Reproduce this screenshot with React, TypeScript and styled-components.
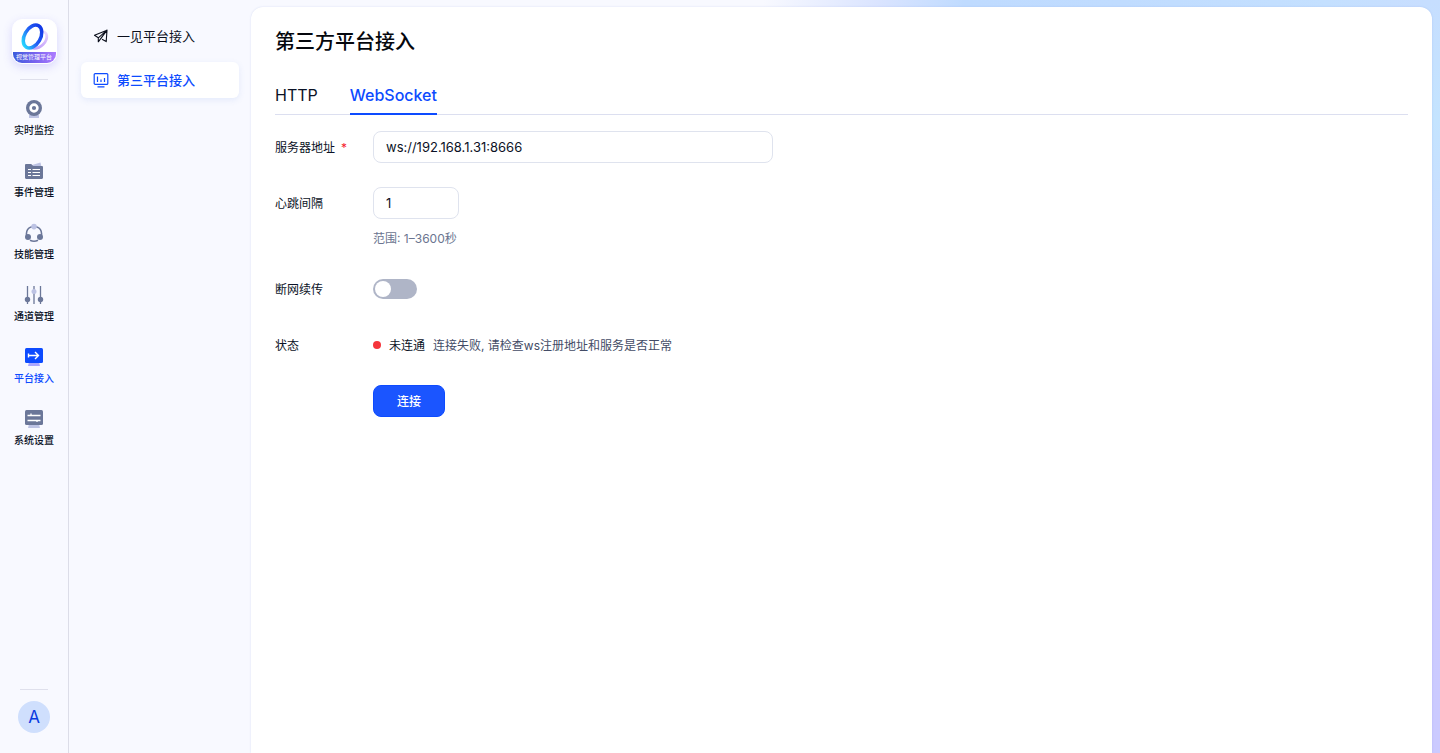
import React, { useState } from 'react';
import styled, { createGlobalStyle } from 'styled-components';

const GlobalStyle = createGlobalStyle`
  *, *::before, *::after { box-sizing: border-box; }
  body {
    margin: 0;
    color: #0b1226;
    background: #f8f9ff;
    font-family: Inter, "Noto Sans CJK SC", sans-serif;
    font-size: 12px;
    line-height: 20px;
  }
  a { color: inherit; text-decoration: none; }
  button, input { font: inherit; color: inherit; }
`;

const Page = styled.div`
  display: flex;
  min-height: 100vh;
  background:
    linear-gradient(180deg, #c6deff 0, #c4e4ff 120px, #cbdcff 250px, #cbcbff 420px, #cbcaff 100%) right / 20px 100% no-repeat,
    linear-gradient(90deg, #f8f9ff 53%, #dae4ff 61%, #bfdbff 67%, #c0dcff 78%, #c4e0ff 92%, #c9deff 100%) top / 100% 20px no-repeat,
    #f8f9ff;
`;

const Rail = styled.nav`
  display: flex;
  flex: none;
  flex-direction: column;
  align-items: center;
  width: 69px;
  padding: 19px 0 20px;
  background: #f8f9ff;
  border-right: 1px solid #dcdde8;
`;

const LogoTile = styled.a`
  display: flex;
  flex-direction: column;
  align-items: center;
  width: 45px;
  height: 45px;
  overflow: hidden;
  border: 1px solid #fff;
  border-radius: 10px;
  background: #fff;
  box-shadow: 0 3px 10px rgba(105, 90, 240, 0.22);
`;

const LogoMark = styled.svg`
  flex: none;
  width: 43px;
  height: 32px;
`;

const LogoCaption = styled.span`
  width: 100%;
  height: 11px;
  color: #fff;
  font-size: 6px;
  line-height: 10px;
  text-align: center;
  white-space: nowrap;
  background: linear-gradient(90deg, #3b5bdc, #7762ee 50%, #ad7cff);
`;

const RailDivider = styled.hr`
  width: 28px;
  height: 1px;
  margin: 15px 0 0;
  border: 0;
  background: #dfe0ec;
`;

const RailList = styled.ul`
  display: flex;
  flex: 1;
  flex-direction: column;
  gap: 22px;
  margin: 0;
  padding: 19px 0 0;
  list-style: none;
`;

const RailLink = styled.a<{ $active?: boolean }>`
  display: flex;
  flex-direction: column;
  align-items: center;
  gap: 3px;
  height: 40px;
  color: ${(p) => (p.$active ? '#0d4bff' : '#0b1226')};
  font-size: 10px;
  font-weight: 500;
  line-height: 16px;

  svg { flex: none; width: 20px; height: 20px; }
`;

const Avatar = styled.button`
  width: 32px;
  height: 32px;
  margin-top: 11px;
  padding: 0;
  border: 0;
  border-radius: 50%;
  color: #0a3be0;
  font-size: 17px;
  line-height: 32px;
  background: #cfdffd;
`;

const SideMenu = styled.nav`
  display: flex;
  flex: none;
  flex-direction: column;
  gap: 8px;
  width: 182px;
  padding: 18px 12px;
  background: #f8f9ff;
`;

const MenuLink = styled.a<{ $active?: boolean }>`
  display: flex;
  align-items: center;
  gap: 8px;
  height: 36px;
  padding: 0 12px;
  border-radius: 6px;
  color: ${(p) => (p.$active ? '#0d4bff' : '#0b0f1c')};
  font-size: 13px;
  font-weight: ${(p) => (p.$active ? 500 : 400)};
  background: ${(p) => (p.$active ? '#fff' : 'transparent')};
  box-shadow: ${(p) => (p.$active ? '0 2px 6px rgba(80, 120, 220, 0.12)' : 'none')};

  svg { width: 16px; height: 16px; }
`;

const Content = styled.main`
  flex: 1;
  min-width: 0;
  margin: 7px 8px 0 0;
  padding: 20px 24px;
  border-radius: 12px 12px 0 0;
  background: #fff;
  box-shadow: 0 0 2px rgba(90, 120, 200, 0.22);
`;

const Title = styled.h1`
  margin: 0;
  color: #05070d;
  font-size: 20px;
  font-weight: 500;
  line-height: 30px;
`;

const Tabs = styled.div`
  display: flex;
  gap: 32px;
  margin: 18px 0 16px;
  border-bottom: 1px solid #dcdff0;
`;

const Tab = styled.button<{ $active: boolean }>`
  height: 40px;
  margin-bottom: -1px;
  padding: 2px 0 0;
  border: 0;
  border-bottom: 2px solid ${(p) => (p.$active ? '#0d4bff' : 'transparent')};
  color: ${(p) => (p.$active ? '#0d4bff' : '#0b1226')};
  font-size: 16px;
  font-weight: ${(p) => (p.$active ? 500 : 400)};
  background: none;
  cursor: pointer;
`;

const Form = styled.form`
  display: flex;
  flex-direction: column;
  gap: 24px;
`;

const Row = styled.div`
  display: flex;
  align-items: flex-start;
`;

const FieldLabel = styled.label`
  flex: none;
  width: 98px;
  height: 32px;
  line-height: 34px;
`;

const Required = styled.span`
  margin-left: 6px;
  color: #f5222d;
`;

const Field = styled.div`
  display: flex;
  align-items: center;
  flex-wrap: wrap;
  gap: 8px;
  min-height: 32px;
`;

const NumberField = styled(Field)`
  flex-direction: column;
  align-items: flex-start;
  gap: 10px;
`;

const TextInput = styled.input<{ $width: number }>`
  width: ${(p) => p.$width}px;
  height: 32px;
  padding: 0 12px;
  border: 1px solid #dfe3ee;
  border-radius: 8px;
  outline: none;
  font-size: 13px;
  background: #fff;
`;

const Hint = styled.span`
  color: #6b7590;
  line-height: 20px;
`;

const Switch = styled.input`
  appearance: none;
  display: flex;
  width: 44px;
  height: 20px;
  margin: 0;
  padding: 2px;
  border-radius: 10px;
  background: #afb5c7;
  cursor: pointer;

  &::before {
    content: '';
    width: 16px;
    height: 16px;
    border-radius: 50%;
    background: #fff;
  }
  &:checked { justify-content: flex-end; background: #0d4bff; }
`;

const StatusDot = styled.i`
  width: 8px;
  height: 8px;
  border-radius: 50%;
  background: #f5353b;
`;

const StatusText = styled.span<{ $muted?: boolean }>`
  height: 32px;
  color: ${(p) => (p.$muted ? '#434c66' : '#0b1226')};
  line-height: 34px;
`;

const SubmitButton = styled.button`
  width: 72px;
  height: 32px;
  margin-left: 98px;
  padding: 2px 0 0;
  border: 1px solid #0d4bff;
  border-radius: 8px;
  color: #fff;
  font-weight: 500;
  background: #1b55ff;
  cursor: pointer;
`;

const DARK = '#6b7799';
const LIGHT = '#bdc3e4';

const CameraIcon = () => (
  <svg viewBox="0 0 20 20" fill="none" aria-hidden="true">
    <rect x="5" y="15.5" width="10" height="3.5" rx="0.6" fill={LIGHT} />
    <circle cx="10" cy="9" r="8" fill={DARK} />
    <circle cx="10" cy="9" r="3.4" stroke="#fff" strokeWidth="2.6" fill={DARK} />
  </svg>
);

const EventIcon = () => (
  <svg viewBox="0 0 20 20" fill="none" aria-hidden="true">
    <path d="M8 4 16.500 1.500l1 4.500H9z" fill={LIGHT} />
    <path d="M1 4.200c0-.7.5-1.200 1.200-1.200h5l2 2h8.600c.7 0 1.200.5 1.200 1.200v10.600c0 .7-.5 1.200-1.200 1.200H2.200c-.7 0-1.200-.5-1.200-1.200z" fill={DARK} />
    <path d="M4 8.500h3M8.500 8.500H16M4 11.500h3M8.500 11.500H16M4 14.500h3M8.500 14.500H16" stroke="#fff" strokeWidth="1.200" />
  </svg>
);

const SkillIcon = () => (
  <svg viewBox="0 0 20 20" fill="none" aria-hidden="true">
    <path d="M3 14C1.200 8.500 4 3.500 10 3.500S18.800 8.500 17 14M6 17.300c2.500 1.200 5.500 1.200 8 0" stroke={DARK} strokeWidth="1.600" />
    <circle cx="10" cy="3.600" r="2.800" fill={LIGHT} />
    <circle cx="4" cy="14" r="3" fill={DARK} />
    <circle cx="16" cy="14" r="3" fill={DARK} />
  </svg>
);

const ChannelIcon = () => (
  <svg viewBox="0 0 20 20" fill="none" aria-hidden="true">
    <path d="M3.500 1v18M10 1v18M16.500 1v18" stroke={DARK} strokeWidth="1.300" />
    <circle cx="3.500" cy="14.500" r="2.700" fill={DARK} />
    <circle cx="10" cy="6.500" r="2.500" fill={LIGHT} />
    <circle cx="16.500" cy="14.500" r="2.700" fill={DARK} />
  </svg>
);

const PlatformIcon = () => (
  <svg viewBox="0 0 20 20" fill="none" aria-hidden="true">
    <path d="M5 15h10l1 4H4z" fill="#a9a6ff" />
    <rect x="1" y="1" width="18" height="15" rx="1.500" fill="#0d4bff" />
    <path d="M4.500 6.500v4M4.500 8.500h10M11 5l3.500 3.500L11 12" stroke="#fff" strokeWidth="1.400" />
  </svg>
);

const SettingsIcon = () => (
  <svg viewBox="0 0 20 20" fill="none" aria-hidden="true">
    <path d="M5 15h10l1 4H4z" fill={LIGHT} />
    <rect x="1" y="1" width="18" height="15" rx="1.500" fill={DARK} />
    <path d="M3.500 6.500h13M3.500 11.500h13M7 4.500v2M13 13v-2" stroke="#fff" strokeWidth="1.300" />
  </svg>
);

const SendIcon = () => (
  <svg viewBox="0 0 16 16" fill="none" stroke="currentColor" strokeWidth="1.100" strokeLinejoin="round" aria-hidden="true">
    <path d="M14 2.200 1.500 7.300l3.800 2.500L14 2.200 13.200 13.600 9 11.300M5.300 9.800v4L14 2.200 7.800 10.600" />
  </svg>
);

const BoardIcon = () => (
  <svg viewBox="0 0 16 16" fill="none" stroke="currentColor" strokeWidth="1.200" aria-hidden="true">
    <rect x="1.200" y="1.600" width="13.600" height="10.800" rx="1" />
    <path d="M4.500 4.500v5.500M8 7.500V10M11.500 6v4M4.500 14.800h7" />
  </svg>
);

const railItems = [
  { label: '实时监控', Icon: CameraIcon },
  { label: '事件管理', Icon: EventIcon },
  { label: '技能管理', Icon: SkillIcon },
  { label: '通道管理', Icon: ChannelIcon },
  { label: '平台接入', Icon: PlatformIcon, active: true },
  { label: '系统设置', Icon: SettingsIcon },
];

const tabs = ['HTTP', 'WebSocket'];

export default function App() {
  const [tab, setTab] = useState('WebSocket');

  return (
    <Page>
      <GlobalStyle />
      <Rail>
        <LogoTile href="#">
          <LogoMark viewBox="0 0 43 32" fill="none" aria-hidden="true">
            <defs>
              <linearGradient id="ring" x1="0.700" y1="0" x2="0.300" y2="1">
                <stop offset="0" stopColor="#1238e6" />
                <stop offset="0.500" stopColor="#2460f5" />
                <stop offset="1" stopColor="#25d5ff" />
              </linearGradient>
              <linearGradient id="echo" x1="0" y1="0" x2="0" y2="1">
                <stop offset="0" stopColor="#eddcff" />
                <stop offset="1" stopColor="#c5a3fa" />
              </linearGradient>
            </defs>
            <path d="M27 12C35.500 10 35.500 19 30 24.500 26.500 28 23 29 18.500 28" stroke="url(#echo)" strokeWidth="2.800" />
            <ellipse cx="19.500" cy="16.500" rx="8" ry="12.300" transform="rotate(30 19.500 16.500)" stroke="url(#ring)" strokeWidth="3.500" />
          </LogoMark>
          <LogoCaption>视觉管理平台</LogoCaption>
        </LogoTile>
        <RailDivider />
        <RailList>
          {railItems.map(({ label, Icon, active }) => (
            <li key={label}>
              <RailLink href="#" $active={active}>
                <Icon />
                {label}
              </RailLink>
            </li>
          ))}
        </RailList>
        <RailDivider />
        <Avatar type="button">A</Avatar>
      </Rail>

      <SideMenu>
        <MenuLink href="#"><SendIcon />一见平台接入</MenuLink>
        <MenuLink href="#" $active><BoardIcon />第三平台接入</MenuLink>
      </SideMenu>

      <Content>
        <Title>第三方平台接入</Title>
        <Tabs role="tablist">
          {tabs.map((name) => (
            <Tab key={name} type="button" role="tab" aria-selected={tab === name} $active={tab === name} onClick={() => setTab(name)}>
              {name}
            </Tab>
          ))}
        </Tabs>
        <Form onSubmit={(e) => e.preventDefault()}>
          <Row>
            <FieldLabel htmlFor="server">服务器地址<Required>*</Required></FieldLabel>
            <Field><TextInput id="server" $width={400} defaultValue="ws://192.168.1.31:8666" /></Field>
          </Row>
          <Row>
            <FieldLabel htmlFor="heartbeat">心跳间隔</FieldLabel>
            <NumberField>
              <TextInput id="heartbeat" $width={86} inputMode="numeric" defaultValue="1" />
              <Hint>范围: 1–3600秒</Hint>
            </NumberField>
          </Row>
          <Row>
            <FieldLabel htmlFor="resume">断网续传</FieldLabel>
            <Field><Switch id="resume" type="checkbox" role="switch" /></Field>
          </Row>
          <Row>
            <FieldLabel as="span">状态</FieldLabel>
            <Field role="status">
              <StatusDot />
              <StatusText>未连通</StatusText>
              <StatusText $muted>连接失败, 请检查ws注册地址和服务是否正常</StatusText>
            </Field>
          </Row>
          <SubmitButton type="submit">连接</SubmitButton>
        </Form>
      </Content>
    </Page>
  );
}
